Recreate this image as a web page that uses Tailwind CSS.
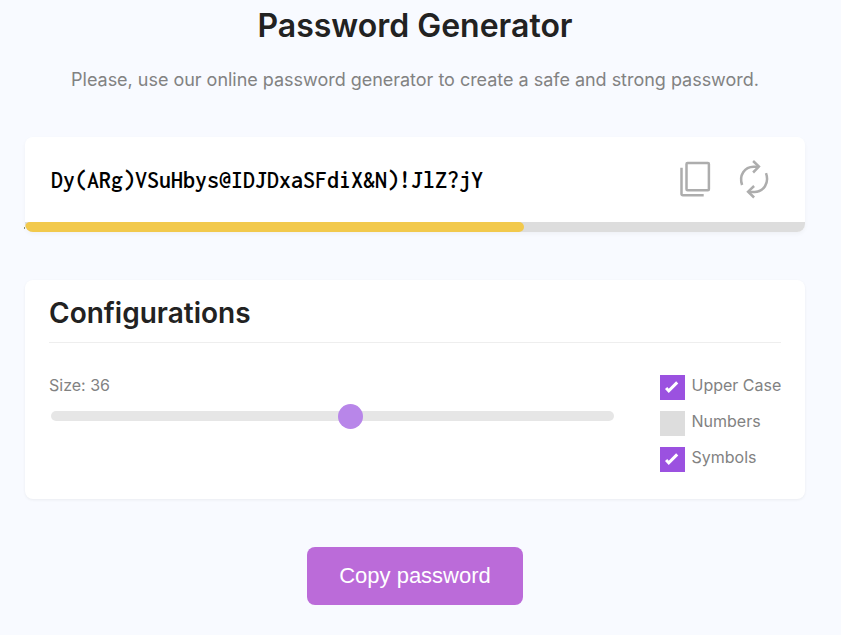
<!DOCTYPE html>
<html lang="en">
<head>
<meta charset="utf-8">
<title>Password Generator</title>
<script src="https://cdn.jsdelivr.net/npm/@tailwindcss/browser@4"></script>
</head>
<body class="h-[635px] overflow-hidden bg-[#f8faff] font-['Inter',sans-serif] text-[#828282]">
<main class="ml-[25px] flex w-[780px] flex-col">
  <h1 class="mt-1.5 h-10 text-center text-[32px] leading-10 font-semibold whitespace-nowrap text-[#222]">Password Generator</h1>
  <p class="mt-[22px] h-6 text-center text-[18px] leading-6 tracking-[-0.02px] whitespace-nowrap">Please, use our online password generator to create a safe and strong password.</p>

  <section class="relative mt-[45px] h-[95px] rounded-lg bg-white shadow-[0_2px_4px_rgba(0,0,0,0.04)]">
    <span class="absolute top-[90px] -left-px h-0.5 w-px bg-[#8a9068]"></span>
    <div class="flex h-full flex-col overflow-hidden rounded-lg">
      <div class="flex h-[85px] items-center pr-[35px] pl-[26px]">
        <span class="flex-1 font-['Inconsolata','DejaVu_Sans_Mono',monospace] text-[24px] font-semibold whitespace-nowrap text-black">Dy(ARg)VSuHbys@IDJDxaSFdiX&amp;N)!JlZ?jY</span>
        <svg class="mr-[27px] h-10 w-8" viewBox="0 0 32 40" fill="none" stroke="#adadad" stroke-width="2.5">
          <rect x="7.5" y="3" width="22.4" height="27.2" rx="1"/>
          <path d="M2.5 7.8V34a1.3 1.3 0 0 0 1.3 1.3H24.7"/>
        </svg>
        <svg class="h-10 w-8" viewBox="0 0 32 40" fill="none" stroke="#adadad" stroke-width="2.5">
          <path d="M4.1 25C0.7 15.4 6.6 6.7 15.6 6.7h5"/>
          <path d="M15.1 1l5.8 5.6-5.8 5.9"/>
          <path d="M28 13.2C31.5 23 25.6 31.9 16.6 31.9h-6"/>
          <path d="M16.1 26l-6 5.7 6 5.8"/>
        </svg>
      </div>
      <div class="h-2.5 bg-[#ddd]"><div class="h-full w-[499px] rounded-[5px] bg-[#f2c94c]"></div></div>
    </div>
  </section>

  <section class="mt-12 h-[219px] rounded-lg bg-white px-6 shadow-[0_1px_3px_rgba(0,0,0,0.06)]">
    <h2 class="h-[63px] border-b border-[#eee] pt-[15px] text-[28px] leading-9 font-semibold text-[#222]">Configurations</h2>
    <div class="flex justify-between">
      <div class="w-[567px] pt-[30px]">
        <div class="h-6 text-[16px] leading-6">Size: 36</div>
        <div class="mt-[7px] ml-0.5 flex h-[25px] w-[563px] items-center">
          <div class="flex h-2.5 w-full -translate-y-px items-center rounded-[5px] bg-[#e6e6e6]"><div class="ml-[287px] size-[25px] shrink-0 translate-y-px rounded-full bg-[#b886e9]"></div></div>
        </div>
      </div>
      <div class="flex w-[121px] flex-col gap-[11px] pt-8 text-[16px] leading-[21px] whitespace-nowrap">
        <label class="flex h-[25px] gap-[6.5px]"><span class="size-[25px] shrink-0 bg-[#9b51e0]"><svg viewBox="0 0 25 25" fill="none" stroke="#fff" stroke-width="3"><path d="M6.1 12.9l2.7 3 8.4-8.5"/></svg></span>Upper Case</label>
        <label class="flex h-[25px] gap-[6.5px]"><span class="size-[25px] shrink-0 bg-[#ddd]"></span>Numbers</label>
        <label class="flex h-[25px] gap-[6.5px]"><span class="size-[25px] shrink-0 bg-[#9b51e0]"><svg viewBox="0 0 25 25" fill="none" stroke="#fff" stroke-width="3"><path d="M6.1 12.9l2.7 3 8.4-8.5"/></svg></span>Symbols</label>
      </div>
    </div>
  </section>

  <button class="mt-12 h-[58px] w-[216px] self-center rounded-lg bg-[#bb6bd9] pb-px font-['Liberation_Sans',sans-serif] text-[22px] text-white">Copy password</button>
</main>
</body>
</html>
